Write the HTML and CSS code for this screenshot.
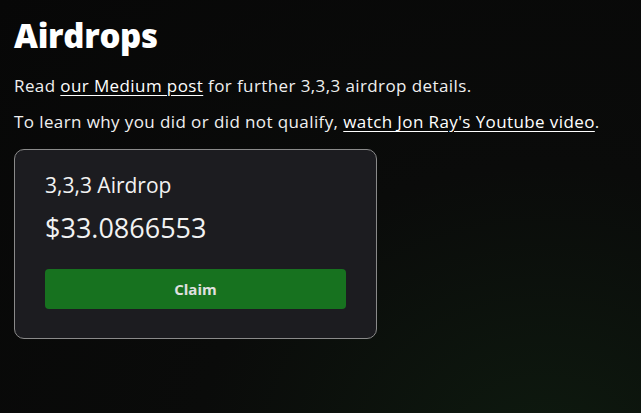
FILE: index.html
```html
<!DOCTYPE html>
<html lang="en">
<head>
  <meta charset="UTF-8" />
  <title>Airdrops</title>
  <link rel="stylesheet" href="styles.css">
</head>
<body>

<main class="pagina">
  <h1 class="titulo">Airdrops</h1>
  <p class="texto">Read <a href="#">our Medium post</a> for further 3,3,3 airdrop details.</p>
  <p class="texto">To learn why you did or did not qualify, <a href="#">watch Jon Ray's Youtube video</a>.</p>

  <div class="tarjeta">
    <div class="tarjeta-nombre">3,3,3 Airdrop</div>
    <div class="tarjeta-monto">$33.0866553</div>
    <button class="boton-claim">Claim</button>
  </div>
</main>

</body>
</html>
```

FILE: styles.css
```css
* { box-sizing: border-box; }
body {
  margin: 0;
  min-height: 100vh;
  background: radial-gradient(ellipse at 85% 110%, #0e1a0f 0%, #0a0b0a 45%, #070707 100%);
  color: #f2f2f2;
  font-family: 'Open Sans', sans-serif;
  overflow: hidden;
}

.pagina {
  padding: 14px 14px;
}

.titulo {
  margin: 0;
  font-size: 33px;
  font-weight: 800;
  line-height: 44px;
  color: #fff;
  letter-spacing: -0.3px;
}

.texto {
  margin: 16px 0 0;
  font-size: 17px;
  line-height: 24px;
  letter-spacing: 0.4px;
  color: #f0f0f0;
}

.texto + .texto {
  margin-top: 12px;
}

.texto a {
  color: #fff;
  text-decoration: underline;
  text-underline-offset: 3px;
}

.tarjeta {
  width: 363px;
  margin-top: 15px;
  padding: 20px 30px 29px;
  background: #1c1c20;
  border: 1px solid #8a8a8a;
  border-radius: 10px;
}

.tarjeta-nombre {
  font-size: 21px;
  line-height: 30px;
}

.tarjeta-monto {
  margin-top: 10px;
  font-size: 27px;
  line-height: 36px;
}

.boton-claim {
  display: block;
  width: 100%;
  height: 40px;
  margin-top: 23px;
  border: none;
  border-radius: 4px;
  background: #17721f;
  color: #e0e0e0;
  font-family: 'Open Sans', sans-serif;
  font-size: 15px;
  font-weight: 700;
  cursor: pointer;
}
```
